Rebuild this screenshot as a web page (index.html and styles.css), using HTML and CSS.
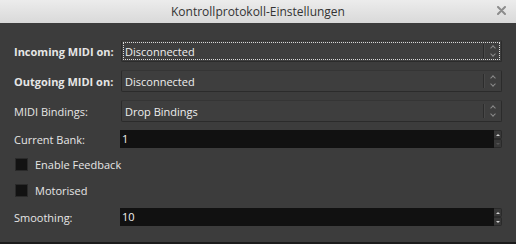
FILE: index.html
```html
<!DOCTYPE html>
<html lang="de">
<head>
    <meta charset="UTF-8">
    <title>Kontrollprotokoll-Einstellungen</title>
    <link rel="stylesheet" href="styles.css">
</head>
<body>
    <div class="window">
        <div class="titlebar">
            <div class="title">Kontrollprotokoll-Einstellungen</div>
            <svg class="close" width="9" height="9" viewBox="0 0 9 9">
                <path d="M1 1 L8 8 M8 1 L1 8" stroke="#8c8c8c" stroke-width="2" stroke-linecap="round"/>
            </svg>
        </div>

        <div class="content">
            <div class="row">
                <div class="label bold">Incoming MIDI on:</div>
                <div class="combo focused">
                    <div class="combo-text">Disconnected</div>
                    <div class="combo-arrow"><span class="up"></span><span class="down"></span></div>
                </div>
            </div>
            <div class="row">
                <div class="label bold">Outgoing MIDI on:</div>
                <div class="combo">
                    <div class="combo-text">Disconnected</div>
                    <div class="combo-arrow"><span class="up"></span><span class="down"></span></div>
                </div>
            </div>
            <div class="row">
                <div class="label">MIDI Bindings:</div>
                <div class="combo">
                    <div class="combo-text">Drop Bindings</div>
                    <div class="combo-arrow"><span class="up"></span><span class="down"></span></div>
                </div>
            </div>
            <div class="row entry-row">
                <div class="label">Current Bank:</div>
                <div class="spin">
                    <div class="entry">1</div>
                    <div class="spin-buttons">
                        <div class="spin-btn"><span class="tri-up"></span></div>
                        <div class="spin-btn dim"><span class="tri-down"></span></div>
                    </div>
                </div>
            </div>
            <div class="row check-row">
                <div class="checkbox"></div>
                <div class="check-label">Enable Feedback</div>
            </div>
            <div class="row check-row tall">
                <div class="checkbox"></div>
                <div class="check-label">Motorised</div>
            </div>
            <div class="row entry-row">
                <div class="label">Smoothing:</div>
                <div class="spin">
                    <div class="entry">10</div>
                    <div class="spin-buttons">
                        <div class="spin-btn"><span class="tri-up"></span></div>
                        <div class="spin-btn"><span class="tri-down"></span></div>
                    </div>
                </div>
            </div>
        </div>
    </div>
</body>
</html>
```

FILE: styles.css
```css
html, body {
    margin: 0;
    padding: 0;
    height: 100%;
}

body {
    font-family: 'Open Sans', 'DejaVu Sans', sans-serif;
    font-size: 11px;
    background-color: #3c3c3c;
    color: #e6e6e6;
}

.window {
    height: 244px;
    display: flex;
    flex-direction: column;
    box-sizing: border-box;
    border-bottom: 2px solid #1c1c1c;
}

.titlebar {
    height: 23px;
    background: linear-gradient(#ececec, #d9d9d9);
    display: flex;
    align-items: center;
    justify-content: center;
    position: relative;
    color: #333333;
    font-size: 12px;
}

.close {
    position: absolute;
    right: 10px;
    top: 6px;
}

.content {
    padding: 17px 14px 0 14px;
    display: flex;
    flex-direction: column;
    gap: 8px;
}

.row {
    display: flex;
    align-items: center;
    height: 22px;
}

.entry-row {
    height: 18px;
}

.check-row {
    height: 17px;
    padding-left: 1px;
}

.check-row.tall {
    height: 19px;
}

.label {
    width: 107px;
    flex-shrink: 0;
}

.bold {
    font-weight: bold;
}

.combo {
    flex: 1;
    height: 22px;
    box-sizing: border-box;
    display: flex;
    align-items: center;
    background-color: #3e3e3e;
    border: 1px solid #2b2b2b;
    border-top-color: #353535;
    border-radius: 2px;
    position: relative;
}

.combo.focused::after {
    content: '';
    position: absolute;
    inset: 1px;
    border: 1px dotted #d8d8d8;
}

.combo-text {
    flex: 1;
    padding-left: 3px;
    color: #eeeeee;
}

.combo-arrow {
    width: 17px;
    height: 14px;
    border-left: 1px solid #2c2c2c;
    box-shadow: inset 1px 0 0 #484848;
    display: flex;
    flex-direction: column;
    align-items: center;
    justify-content: center;
    gap: 2px;
}

.up, .down {
    width: 3px;
    height: 3px;
    border: solid #8a8a8a;
    border-width: 1px 0 0 1px;
}

.up {
    transform: rotate(45deg);
    margin-top: 2px;
}

.down {
    transform: rotate(-135deg);
    margin-bottom: 2px;
}

.spin {
    flex: 1;
    height: 18px;
    display: flex;
    margin-left: -1px;
}

.entry {
    flex: 1;
    background-color: #111111;
    color: #f0f0f0;
    padding-left: 2px;
    line-height: 18px;
}

.spin-buttons {
    width: 8px;
    display: flex;
    flex-direction: column;
}

.spin-btn {
    flex: 1;
    background-color: #383838;
    border: 1px solid #2a2a2a;
    border-left: none;
    border-radius: 0 2px 2px 0;
    display: flex;
    align-items: center;
    justify-content: center;
}

.tri-up {
    border: 2px solid transparent;
    border-bottom: 2px solid #cfcfcf;
    border-top: none;
}

.tri-down {
    border: 2px solid transparent;
    border-top: 2px solid #cfcfcf;
    border-bottom: none;
}

.dim .tri-down {
    border-top-color: #555555;
}

.checkbox {
    width: 13px;
    height: 13px;
    box-sizing: border-box;
    background-color: #121212;
    border: 1px solid #2a2a2a;
    margin-right: 7px;
}

.check-label {
    color: #e6e6e6;
}
```
